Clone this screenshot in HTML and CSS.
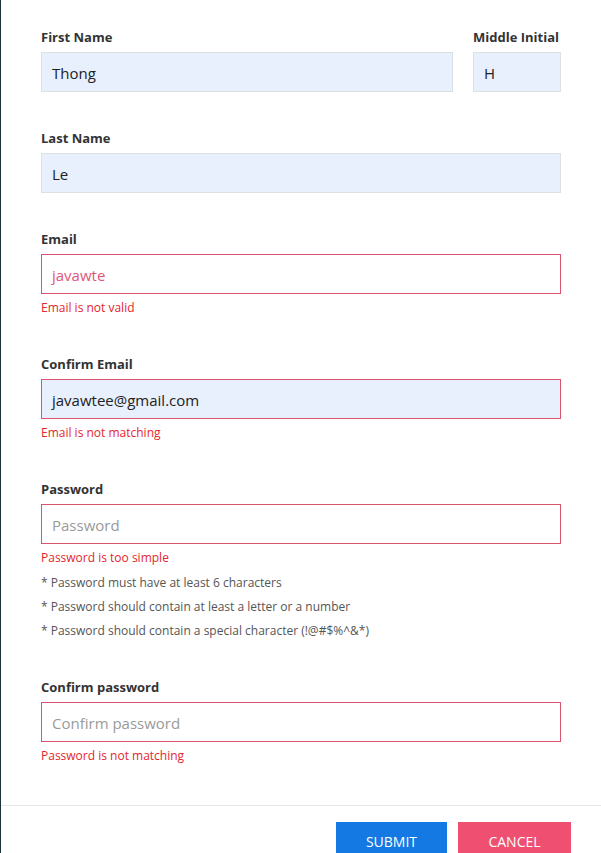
FILE: index.html
```html
<!DOCTYPE html>
<html>
<head>
<meta charset="utf-8">
<link rel="stylesheet" href="styles.css">
</head>
<body>
<div class="modal">
  <form class="form">
    <div class="row">
      <div class="field grow">
        <label class="label">First Name</label>
        <div class="input filled">Thong</div>
      </div>
      <div class="field mi">
        <label class="label">Middle Initial</label>
        <div class="input filled">H</div>
      </div>
    </div>
    <div class="field">
      <label class="label">Last Name</label>
      <div class="input filled">Le</div>
    </div>
    <div class="field">
      <label class="label">Email</label>
      <div class="input invalid bad-text">javawte</div>
      <div class="error">Email is not valid</div>
    </div>
    <div class="field">
      <label class="label">Confirm Email</label>
      <div class="input filled invalid">javawtee@gmail.com</div>
      <div class="error">Email is not matching</div>
    </div>
    <div class="field">
      <label class="label">Password</label>
      <div class="input invalid placeholder">Password</div>
      <div class="error">Password is too simple</div>
      <ul class="hints">
        <li>* Password must have at least 6 characters</li>
        <li>* Password should contain at least a letter or a number</li>
        <li>* Password should contain a special character (!@#$%^&amp;*)</li>
      </ul>
    </div>
    <div class="field">
      <label class="label">Confirm password</label>
      <div class="input invalid placeholder">Confirm password</div>
      <div class="error">Password is not matching</div>
    </div>
  </form>
  <div class="footer">
    <button class="btn submit" type="button">SUBMIT</button>
    <button class="btn cancel" type="button">CANCEL</button>
  </div>
</div>
</body>
</html>
```
FILE: styles.css
```css
html, body {
  margin: 0;
  padding: 0;
  height: 100%;
  overflow: hidden;
}
body {
  background: #1c3438;
  font-family: "Open Sans", "Noto Sans", sans-serif;
  color: #333;
}
.modal {
  margin-left: 1px;
  background: #fff;
  min-height: 100%;
}
.form {
  padding: 28px 40px 0 40px;
  display: flex;
  flex-direction: column;
}
.row {
  display: flex;
  gap: 20px;
}
.grow { flex: 1; }
.mi { width: 88px; }
.field {
  display: flex;
  flex-direction: column;
  margin-bottom: 37px;
}
.label {
  font-size: 13px;
  font-weight: 700;
  line-height: 19px;
  color: #333;
  margin-bottom: 5px;
  white-space: nowrap;
}
.input {
  box-sizing: border-box;
  height: 40px;
  border: 1px solid #dcdfe3;
  padding: 0 10px;
  font-size: 15px;
  line-height: 40px;
  color: #222;
  background: #fff;
  overflow: hidden;
}
.input.filled { background: #e8f0fe; }
.input.invalid { border-color: #d9546c; }
.input.bad-text { color: #e0577a; }
.input.placeholder { color: #9a9a9a; }
.error {
  margin-top: 5px;
  font-size: 12px;
  line-height: 18px;
  color: #e3262b;
}
.field:has(.error) { margin-bottom: 38px; }
.hints {
  list-style: none;
  margin: 4px 0 0 0;
  padding: 0;
}
.hints li {
  font-size: 12px;
  line-height: 24px;
  color: #555;
}
.field:has(.hints) { margin-bottom: 35px; }
.footer {
  border-top: 1px solid #e6e6e6;
  margin-top: 2px;
  padding: 16px 30px 16px 0;
  display: flex;
  justify-content: flex-end;
  gap: 11px;
}
.btn {
  height: 38px;
  border: none;
  color: #fff;
  font-family: "Open Sans", "Noto Sans", sans-serif;
  font-size: 14px;
  padding: 0;
  cursor: pointer;
}
.submit { background: #1479e2; width: 111px; }
.cancel { background: #ef5072; width: 113px; }
```
